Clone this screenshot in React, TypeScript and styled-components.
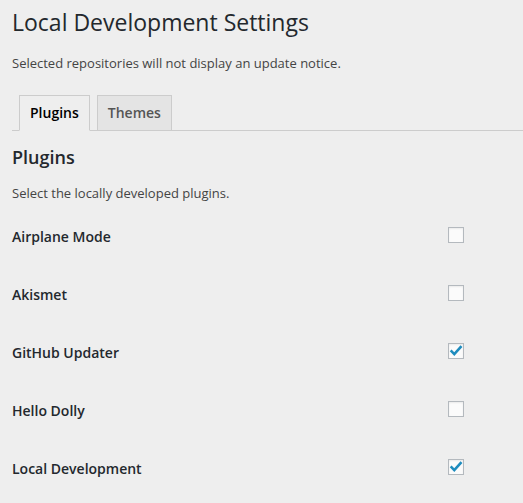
import React from "react";
import styled, { createGlobalStyle } from "styled-components";

const GlobalStyle = createGlobalStyle`
  html, body {
    margin: 0;
    padding: 0;
    background: #eeeeee;
  }
  body {
    font-family: "Open Sans", "Noto Sans", sans-serif;
    color: #23282d;
    -webkit-font-smoothing: antialiased;
  }
`;

const Wrap = styled.div`
  padding: 0 12px;
`;

const Title = styled.h1`
  margin: 0;
  padding-top: 8px;
  font-size: 23px;
  font-weight: 400;
  line-height: 29px;
  color: #23282d;
`;

const Lead = styled.p`
  margin: 16px 0 0;
  font-size: 13px;
  line-height: 20px;
  color: #444;
`;

const TabBar = styled.div`
  margin-top: 22px;
  display: flex;
  align-items: flex-end;
  border-bottom: 1px solid #ccc;
  margin-right: -12px;
`;

const Tab = styled.div<{ $active?: boolean }>`
  margin-left: 7px;
  margin-bottom: -1px;
  padding: 5px 10px;
  font-size: 14px;
  line-height: 24px;
  font-weight: 600;
  border: 1px solid #ccc;
  border-bottom-color: ${(p) => (p.$active ? "#eeeeee" : "#ccc")};
  background: ${(p) => (p.$active ? "#eeeeee" : "#e4e4e4")};
  color: ${(p) => (p.$active ? "#000" : "#555")};
`;

const SectionTitle = styled.h2`
  margin: 14px 0 0;
  font-size: 18px;
  font-weight: 600;
  line-height: 24px;
  color: #23282d;
`;

const Note = styled.p`
  margin: 14px 0 0;
  font-size: 13px;
  line-height: 20px;
  color: #444;
`;

const List = styled.div`
  margin-top: 3px;
  display: flex;
  flex-direction: column;
`;

const Row = styled.label`
  display: grid;
  grid-template-columns: 436px 16px;
  align-items: center;
  height: 58px;
`;

const Name = styled.span`
  font-size: 14px;
  font-weight: 600;
  line-height: 18px;
  color: #23282d;
  padding-top: 4px;
`;

const Box = styled.span`
  width: 16px;
  height: 16px;
  box-sizing: border-box;
  border: 1px solid #b4b9be;
  background: #fbfbfb;
  box-shadow: inset 0 1px 2px rgba(0, 0, 0, 0.07);
  display: flex;
  align-items: center;
  justify-content: center;
`;

const Check = () => (
  <svg width="14" height="14" viewBox="0 0 14 14">
    <path
      d="M2.6 7.4 L5.3 10.2 L11.6 3.2"
      fill="none"
      stroke="#1e8cbe"
      strokeWidth="2.6"
      strokeLinecap="square"
      strokeLinejoin="miter"
    />
  </svg>
);

const plugins: { name: string; checked: boolean }[] = [
  { name: "Airplane Mode", checked: false },
  { name: "Akismet", checked: false },
  { name: "GitHub Updater", checked: true },
  { name: "Hello Dolly", checked: false },
  { name: "Local Development", checked: true },
];

export default function App() {
  return (
    <>
      <GlobalStyle />
      <Wrap>
        <Title>Local Development Settings</Title>
        <Lead>Selected repositories will not display an update notice.</Lead>
        <TabBar>
          <Tab $active>Plugins</Tab>
          <Tab>Themes</Tab>
        </TabBar>
        <SectionTitle>Plugins</SectionTitle>
        <Note>Select the locally developed plugins.</Note>
        <List>
          {plugins.map((p) => (
            <Row key={p.name}>
              <Name>{p.name}</Name>
              <Box>{p.checked && <Check />}</Box>
            </Row>
          ))}
        </List>
      </Wrap>
    </>
  );
}
